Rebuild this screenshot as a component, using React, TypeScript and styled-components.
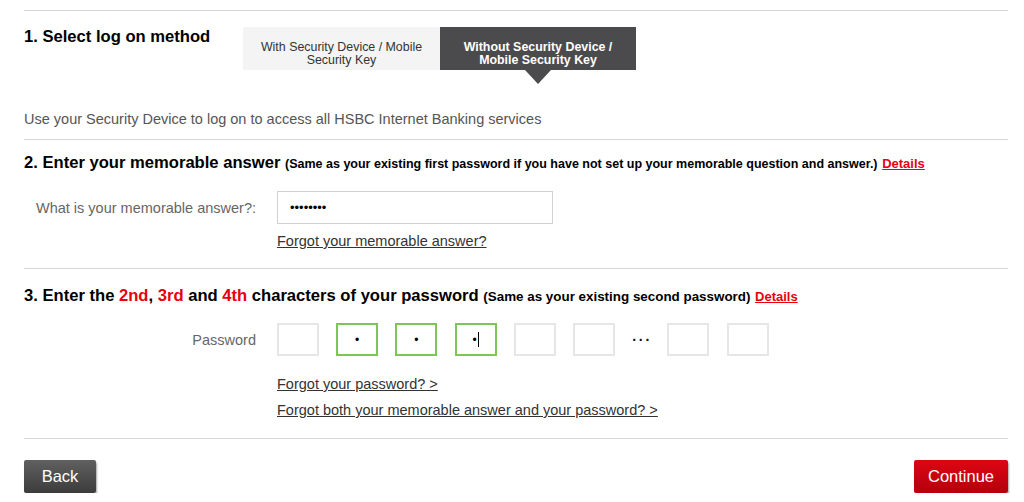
import React from "react";
import styled, { createGlobalStyle } from "styled-components";

const Global = createGlobalStyle`
  html, body { margin: 0; padding: 0; background: #fff; }
  body { font-family: "Liberation Sans", Arial, sans-serif; color: #000; }
  * { box-sizing: border-box; }
`;

const Page = styled.div`
  padding: 10px 16px 0 24px;
  width: 1024px;
`;

const Section = styled.section<{ $top: number; $bottom: number }>`
  border-top: 1px solid #d6d6d6;
  padding-top: ${(p) => p.$top}px;
  padding-bottom: ${(p) => p.$bottom}px;
`;

const TopRow = styled.div`
  display: flex;
  align-items: flex-start;
`;

const Heading = styled.h2<{ $width?: number }>`
  margin: 0;
  font-size: 16.6px;
  line-height: 20px;
  font-weight: bold;
  color: #000;
  white-space: nowrap;
  ${(p) => (p.$width ? `width: ${p.$width}px; flex: none;` : "")}
`;

const Note = styled.span<{ $size?: number }>`
  font-size: ${(p) => p.$size ?? 12.5}px;
  font-weight: bold;
`;

const Red = styled.span`
  color: #e8000f;
`;

const DetailsLink = styled.a`
  font-size: 13px;
  font-weight: bold;
  color: #e8000f;
  text-decoration: underline;
`;

const Tabs = styled.div`
  display: flex;
`;

const Tab = styled.div<{ $active?: boolean; $w: number }>`
  position: relative;
  width: ${(p) => p.$w}px;
  height: 43px;
  padding-top: 14px;
  text-align: center;
  font-size: 12.4px;
  line-height: 13px;
  background: ${(p) => (p.$active ? "#4b4b4d" : "#f4f4f4")};
  color: ${(p) => (p.$active ? "#fff" : "#333")};
  font-weight: ${(p) => (p.$active ? "bold" : "normal")};
  ${(p) =>
    p.$active
      ? `&::after {
    content: "";
    position: absolute;
    left: 50%;
    bottom: -14px;
    margin-left: -13px;
    border-left: 13px solid transparent;
    border-right: 13px solid transparent;
    border-top: 14px solid #4b4b4d;
  }`
      : ""}
`;

const Desc = styled.p`
  margin: 39px 0 0;
  font-size: 14.5px;
  line-height: 20px;
  color: #555;
`;

const FormRow = styled.div<{ $mt: number }>`
  display: grid;
  grid-template-columns: 232px auto;
  column-gap: 21px;
  align-items: center;
  margin-top: ${(p) => p.$mt}px;
`;

const Label = styled.label`
  text-align: right;
  font-size: 14.5px;
  color: #666;
`;

const AnswerInput = styled.input`
  width: 276px;
  height: 33px;
  border: 1px solid #d0d0d0;
  padding: 0 12px;
  font-family: "Liberation Sans", Arial, sans-serif;
  font-size: 13px;
  color: #000;
  outline: none;
`;

const Links = styled.div<{ $mt: number; $gap: number }>`
  margin-left: 253px;
  margin-top: ${(p) => p.$mt}px;
  display: flex;
  flex-direction: column;
  align-items: flex-start;
  gap: ${(p) => p.$gap}px;
`;

const TextLink = styled.a`
  font-size: 14.5px;
  line-height: 18px;
  color: #333;
  text-decoration: underline;
`;

const Boxes = styled.div`
  display: flex;
  align-items: center;
  gap: 17.2px;
`;

const CharBox = styled.div<{ $active?: boolean }>`
  position: relative;
  width: 42px;
  height: 33px;
  border: 2px solid ${(p) => (p.$active ? "#7cc556" : "#e6e6e6")};
  display: flex;
  align-items: center;
  justify-content: center;
  font-size: 12px;
  color: #000;
`;

const Caret = styled.span`
  display: inline-block;
  width: 1px;
  height: 15px;
  background: #000;
  margin-left: 1px;
`;

const Ellipsis = styled.div`
  width: 18px;
  text-align: center;
  font-size: 14px;
  font-weight: bold;
  letter-spacing: 2px;
  color: #111;
`;

const Footer = styled.div`
  border-top: 1px solid #d6d6d6;
  padding-top: 21px;
  display: flex;
  justify-content: space-between;
`;

const Button = styled.button<{ $primary?: boolean; $w: number }>`
  width: ${(p) => p.$w}px;
  height: 33px;
  border: none;
  border-radius: 2px;
  font-family: "Liberation Sans", Arial, sans-serif;
  font-size: 16.5px;
  color: #fff;
  background: ${(p) =>
    p.$primary
      ? "linear-gradient(#dd0613, #b3000c)"
      : "linear-gradient(#606060, #3c3c3c)"};
  box-shadow: 1px 2px 2px rgba(0, 0, 0, 0.35);
  cursor: pointer;
`;

export default function App() {
  return (
    <>
      <Global />
      <Page>
        <Section $top={16} $bottom={10}>
          <TopRow>
            <Heading $width={219}>1. Select log on method</Heading>
            <Tabs>
              <Tab $w={197}>
                With Security Device / Mobile
                <br />
                Security Key
              </Tab>
              <Tab $w={196} $active>
                Without Security Device /
                <br />
                Mobile Security Key
              </Tab>
            </Tabs>
          </TopRow>
          <Desc>Use your Security Device to log on to access all HSBC Internet Banking services</Desc>
        </Section>

        <Section $top={13} $bottom={18}>
          <Heading>
            2. Enter your memorable answer{" "}
            <Note>
              (Same as your existing first password if you have not set up your memorable question and answer.)
            </Note>{" "}
            <DetailsLink>Details</DetailsLink>
          </Heading>
          <FormRow $mt={17}>
            <Label>What is your memorable answer?:</Label>
            <AnswerInput type="password" readOnly value="abcdefgh" />
          </FormRow>
          <Links $mt={8} $gap={8}>
            <TextLink>Forgot your memorable answer?</TextLink>
          </Links>
        </Section>

        <Section $top={17} $bottom={19}>
          <Heading>
            3. Enter the <Red>2nd</Red>, <Red>3rd</Red> and <Red>4th</Red> characters of your password{" "}
            <Note $size={13.4}>(Same as your existing second password)</Note> <DetailsLink>Details</DetailsLink>
          </Heading>
          <FormRow $mt={16}>
            <Label>Password</Label>
            <Boxes>
              <CharBox />
              <CharBox $active>•</CharBox>
              <CharBox $active>•</CharBox>
              <CharBox $active>
                •<Caret />
              </CharBox>
              <CharBox />
              <CharBox />
              <Ellipsis>···</Ellipsis>
              <CharBox />
              <CharBox />
            </Boxes>
          </FormRow>
          <Links $mt={19} $gap={8}>
            <TextLink>Forgot your password? &gt;</TextLink>
            <TextLink>Forgot both your memorable answer and your password? &gt;</TextLink>
          </Links>
        </Section>

        <Footer>
          <Button $w={72}>Back</Button>
          <Button $w={94} $primary>
            Continue
          </Button>
        </Footer>
      </Page>
    </>
  );
}
